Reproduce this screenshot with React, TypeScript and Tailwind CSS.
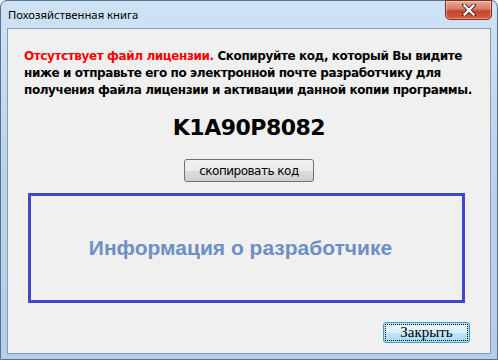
import React from "react";

export default function App() {
  return (
    <div className="w-[498px] h-[360px] relative overflow-hidden bg-[#f0f0f0]">
      <div className="absolute inset-0 rounded-t-[7px] border border-[#5b6f86] bg-[linear-gradient(180deg,#cfe3f7_0%,#bcd5ee_40%,#b4cde9_100%)] flex flex-col">
        <div className="h-[27px] flex items-center pl-[7px] relative">
          <span className="text-[11.3px] text-black font-['Noto_Sans',sans-serif] mt-[1px]">Похозяйственная книга</span>
          <div className="absolute right-[5px] top-[-1px] w-[47px] h-[20px] rounded-b-[5px] border border-[#7a2f22] bg-[linear-gradient(180deg,#e9a99a_0%,#d67a66_45%,#c7452b_55%,#d25a3e_100%)] flex items-center justify-center shadow-[inset_0_0_0_1px_rgba(255,255,255,0.35)]">
            <svg width="14" height="12" viewBox="0 0 14 12">
              <path d="M2 1 L12 11 M12 1 L2 11" stroke="#4a1a12" strokeWidth="4" strokeLinecap="square" />
              <path d="M2.5 1.5 L11.5 10.5 M11.5 1.5 L2.5 10.5" stroke="#ffffff" strokeWidth="2.4" strokeLinecap="square" />
            </svg>
          </div>
        </div>
        <div className="flex-1 mx-[6px] mb-[5px] border border-[#8a9cb2] bg-[#f0f0f0] flex flex-col">
          <p className="pt-[19px] pl-[16px] pr-[10px] text-[12px] leading-[17px] font-bold font-['DejaVu_Sans',sans-serif] text-black tracking-[-0.4px]">
            <span className="text-[#ff0000]">Отсутствует файл лицензии.</span>{" "}Скопируйте код, который Вы видите ниже и отправьте его по электронной почте разработчику для получения файла лицензии и активации данной копии программы.
          </p>
          <div className="mt-[17px] text-center text-[22px] leading-[24px] font-bold font-['DejaVu_Sans',sans-serif] text-black tracking-[-0.5px]">
            K1A90P8082
          </div>
          <div className="flex justify-center mt-[19px]">
            <div className="w-[130px] h-[23px] rounded-[3px] border border-[#707070] bg-[linear-gradient(180deg,#f2f2f2_0%,#ebebeb_50%,#dddddd_51%,#cfcfcf_100%)] flex items-center justify-center text-[12px] font-['DejaVu_Sans',sans-serif] text-black tracking-[-0.5px]">
              скопировать код
            </div>
          </div>
          <div className="mt-[11px] ml-[20px] w-[437px] h-[110px] border-[3px] border-[#3f47cc] flex items-center justify-center pr-[12px]">
            <span className="text-[21px] font-bold font-['Liberation_Sans',sans-serif] text-[#6d8fc6]">Информация о разработчике</span>
          </div>
          <div className="flex justify-end mt-[19px] pr-[20px]">
            <div className="w-[87px] h-[21px] rounded-[3px] border border-[#3c9fd4] bg-[linear-gradient(180deg,#eaf6fd_0%,#d9f0fc_50%,#bee6fd_51%,#a7d9f5_100%)] p-[1px] shadow-[inset_0_0_0_1px_#a8e0f8]">
              <div className="w-full h-full border border-dotted border-black flex items-center justify-center text-[15px] font-['Liberation_Serif',serif] text-black leading-none">
                Закрыть
              </div>
            </div>
          </div>
        </div>
      </div>
    </div>
  );
}
